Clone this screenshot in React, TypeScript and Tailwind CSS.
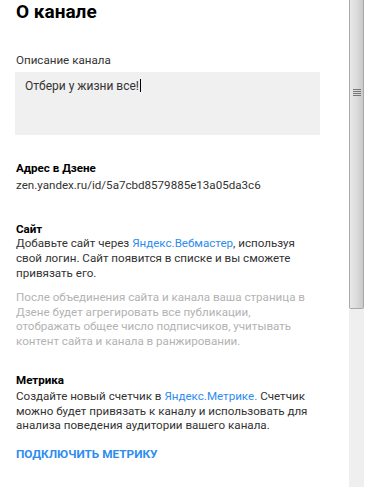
export default function App() {
  return (
    <div className="flex h-[487px] w-[370px] overflow-hidden bg-white" style={{ fontFamily: 'Roboto, "Noto Sans", sans-serif' }}>
      <div className="w-[349px] shrink-0 pl-4 pr-[29px] text-[11.6px] leading-[14.6px] text-[#222]">
        <h1 className="pt-[1px] text-[19px] font-bold leading-[22px] text-black">О канале</h1>
        <div className="mt-[30px] text-[11.6px] text-[#333]">Описание канала</div>
        <div className="-ml-px mt-[4px] h-[63px] bg-[#f0f0f0] px-[10px] pt-[5px] text-[12px] text-[#333]">
          Отбери у жизни все!<span className="ml-px inline-block h-[13px] w-px translate-y-[2px] bg-black" />
        </div>
        <div className="mt-[26px] font-bold text-black">Адрес в Дзене</div>
        <div className="mt-[3px] text-[#333]">zen.yandex.ru/id/5a7cbd8579885e13a05da3c6</div>
        <div className="mt-[29px] font-bold text-black">Сайт</div>
        <p className="mt-[0px] text-[#333]">
          Добавьте сайт через <span className="text-[#2d8cf0]">Яндекс.Вебмастер</span>, используя
          <br />
          свой логин. Сайт появится в списке и вы сможете
          <br />
          привязать его.
        </p>
        <p className="mt-[10px] text-[#b3b3b3]">
          После объединения сайта и канала ваша страница в
          <br />
          Дзене будет агрегировать все публикации,
          <br />
          отображать общее число подписчиков, учитывать
          <br />
          контент сайта и канала в ранжировании.
        </p>
        <div className="mt-[24px] font-bold text-black">Метрика</div>
        <p className="mt-[2px] text-[#333]">
          Создайте новый счетчик в <span className="text-[#2d8cf0]">Яндекс.Метрике.</span> Счетчик
          <br />
          можно будет привязать к каналу и использовать для
          <br />
          анализа поведения аудитории вашего канала.
        </p>
        <div className="mt-[14px] text-[11.8px] font-bold uppercase text-[#2d8cf0]">Подключить метрику</div>
      </div>
      <div className="flex w-[15px] shrink-0 flex-col bg-[#efefef]">
        <div className="flex h-[309px] flex-col items-center rounded-b-[2px] border border-t-0 border-[#a9a9a9] bg-gradient-to-r from-[#e8e8e8] via-[#dcdcdc] to-[#c9c9c9]">
          <div className="mt-[89px] flex w-[8px] flex-col gap-[1px]">
            <div className="h-px bg-[#777]" />
            <div className="h-px bg-[#777]" />
            <div className="h-px bg-[#777]" />
            <div className="h-px bg-[#777]" />
          </div>
        </div>
      </div>
    </div>
  );
}
